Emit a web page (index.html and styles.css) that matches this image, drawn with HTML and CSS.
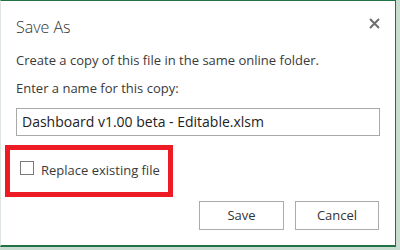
FILE: index.html
```html
<!DOCTYPE html>
<html lang="en">
<head>
<meta charset="utf-8">
<title>Save As</title>
<link rel="stylesheet" href="styles.css">
</head>
<body>
<div class="dialog">
  <div class="header">
    <div class="title">Save As</div>
    <svg class="close" width="11" height="11" viewBox="0 0 11 11" aria-label="Close">
      <path d="M1 1 L10 10 M10 1 L1 10" stroke="#6e6e6e" stroke-width="2" fill="none"/>
    </svg>
  </div>
  <p class="text first">Create a copy of this file in the same online folder.</p>
  <p class="text second">Enter a name for this copy:</p>
  <div class="input">Dashboard v1.00 beta - Editable.xlsm</div>
  <div class="highlight">
    <span class="checkbox"></span>
    <span class="label">Replace existing file</span>
  </div>
  <div class="buttons">
    <div class="btn save">Save</div>
    <div class="btn cancel">Cancel</div>
  </div>
</div>
</body>
</html>
```
FILE: styles.css
```css
html, body {
  margin: 0;
  padding: 0;
}
body {
  width: 400px;
  height: 250px;
  overflow: hidden;
  background: #c9dcd0;
  font-family: "Open Sans", "Noto Sans", sans-serif;
}
.dialog {
  box-sizing: border-box;
  width: 396px;
  height: 247px;
  background: #ffffff;
  border-top: 1px solid #217346;
  border-right: 1px solid #217346;
  border-bottom: 2px solid #217346;
  border-left: 1px solid #dfe6e1;
  padding: 16px 15px 0 15px;
  display: flex;
  flex-direction: column;
}
.header {
  display: flex;
  justify-content: space-between;
  align-items: flex-start;
  height: 20px;
}
.title {
  font-size: 16px;
  line-height: 20px;
  font-weight: 300;
  color: #333;
}
.close {
  margin-top: 1px;
  display: block;
}
.text {
  margin: 0;
  font-size: 13px;
  line-height: 18px;
  color: #3a3a3a;
}
.first { margin-top: 14px; }
.second { margin-top: 10px; }
.input {
  box-sizing: border-box;
  margin-top: 11px;
  height: 28px;
  border: 1px solid #a9a9a9;
  padding: 0 5px;
  font-size: 14px;
  line-height: 26px;
  color: #222;
}
.highlight {
  box-sizing: border-box;
  margin-top: 9px;
  margin-left: -11px;
  width: 168px;
  height: 52px;
  border: 5px solid #ed1c24;
  padding: 11px 0 0 10px;
  display: flex;
  align-items: flex-start;
  gap: 7px;
}
.checkbox {
  box-sizing: border-box;
  width: 14px;
  height: 14px;
  border: 1px solid #7a7a7a;
  background: #fff;
  flex: none;
}
.label {
  font-size: 13px;
  line-height: 18px;
  color: #3a3a3a;
}
.buttons {
  margin-top: 4px;
  display: flex;
  justify-content: flex-end;
  gap: 11px;
  padding-right: 1px;
}
.btn {
  box-sizing: border-box;
  height: 29px;
  border: 1px solid #ababab;
  background: #fff;
  font-size: 13px;
  line-height: 27px;
  text-align: center;
  color: #333;
}
.save { width: 85px; }
.cancel { width: 84px; }
```
